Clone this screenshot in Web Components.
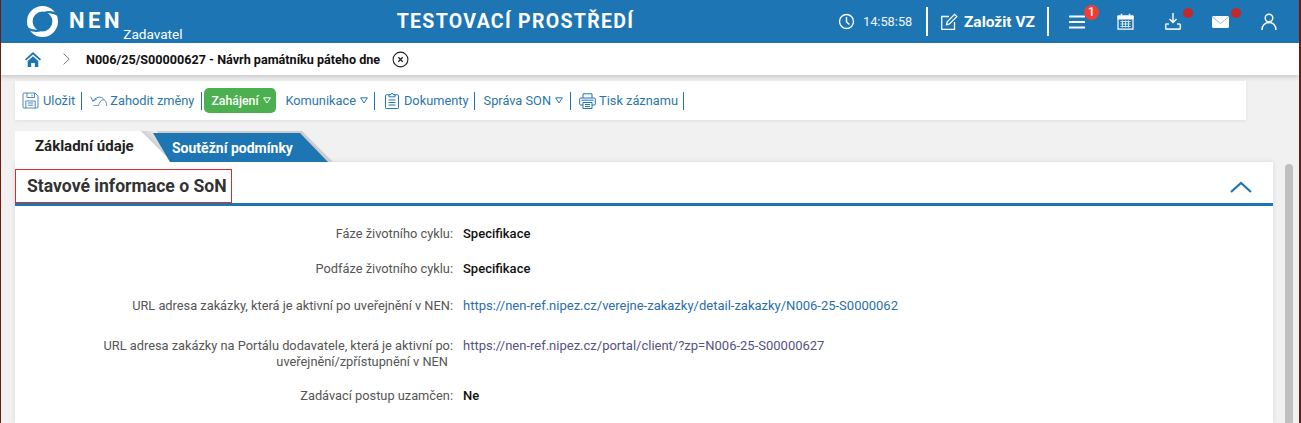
<!DOCTYPE html>
<html lang="cs"><head><meta charset="utf-8"><title>NEN</title>
<style>
html,body{margin:0;padding:0;height:423px;overflow:hidden;background:#f1f1f1;font-family:Roboto,sans-serif}
nen-app{display:block}
</style></head><body>
<nen-app></nen-app>
<script>
const ic={
clock:`<svg width="17" height="17" viewBox="0 0 17 17" fill="none" stroke="#fff" stroke-width="1.4"><circle cx="8.5" cy="8.5" r="7"/><path d="M8.5 4v4.7l2.8 2.8"/></svg>`,
edit:`<svg width="18" height="18" viewBox="0 0 18 18" fill="none" stroke="#fff" stroke-width="1.3"><path d="M9 3.5H1.700v12.800h12.800V9"/><path d="M6.500 11.800l.7-3L14.600 1.400l2.200 2.200-7.400 7.400z"/></svg>`,
menu:`<svg width="16" height="14" viewBox="0 0 16 14" fill="#fff"><rect y="0.5" width="16" height="2" rx=".5"/><rect y="6" width="16" height="2" rx=".5"/><rect y="11.5" width="16" height="2" rx=".5"/></svg>`,
cal:`<svg width="17" height="17" viewBox="0 0 17 17" fill="none" stroke="#fff"><path d="M1 3h15v13.200H1z" stroke-width="1.200"/><path d="M1 3h15v3H1z" fill="#fff"/><path d="M4.500 .8v3M12.500 .8v3" stroke-width="1.500"/><path d="M3.500 8.500h10M3.500 11h10M3.500 13.500h10M5.500 7.500v7M8.500 7.500v7M11.500 7.500v7" stroke="#d5e5f1" stroke-width="1"/></svg>`,
down:`<svg width="17" height="17" viewBox="0 0 17 17" fill="none" stroke="#fff" stroke-width="1.400"><path d="M8 0v9M4.500 6L8 9.500 11.500 6"/><path d="M4 11H1.300a.7.7 0 0 0-.6.7v3.600c0 .4.300.8.700.8h13.200c.4 0 .7-.4.700-.8v-3.600a.7.7 0 0 0-.7-.7H12" stroke="#e2edf5" stroke-width="1.600"/></svg>`,
mail:`<svg width="17" height="12" viewBox="0 0 17 12"><rect width="17" height="12" rx="1.500" fill="#fff"/><path d="M1 1.500l7.500 6 7.500-6" fill="none" stroke="#8dbbdc" stroke-width="1"/></svg>`,
user:`<svg width="16" height="17" viewBox="0 0 16 17" fill="none" stroke="#fff" stroke-width="1.400"><circle cx="8" cy="5" r="3.800"/><path d="M1 17c0-4.500 3-7.500 7-7.500s7 3 7 7.500"/></svg>`,
home:`<svg width="16" height="15" viewBox="0 0 16 15" fill="#1d75b4"><path d="M8 0L0 7.200l1.100 1.200L8 2.400l6.900 6L16 7.200z"/><path d="M2.700 9L8 4.300 13.300 9v6H9.800v-4H6.200v4H2.700z"/></svg>`,
chev:`<svg width="7" height="12" viewBox="0 0 7 12" fill="none" stroke="#777" stroke-width="1"><path d="M.6.6L6.200 6 .6 11.400"/></svg>`,
close:`<svg width="17" height="17" viewBox="0 0 17 17" fill="none" stroke="#222"><circle cx="8.500" cy="8.500" r="7.400" stroke-width="1.100"/><path d="M6.300 6.300l4.400 4.400M10.700 6.300l-4.400 4.400" stroke-width="1.300"/></svg>`,
save:`<svg width="17" height="17" viewBox="0 0 17 17" fill="none" stroke="#4f8ab5" stroke-width="1"><path d="M1 2a1 1 0 0 1 1-1h11l3 3v11a1 1 0 0 1-1 1H2a1 1 0 0 1-1-1z"/><path d="M5 1v4.500h7.500V1M10 2.500v1.700"/><path d="M3.800 16V9h9.400v7M5.800 11h5.400M5.800 13.200h5.400"/></svg>`,
undo:`<svg width="17" height="10" viewBox="0 0 17 10" fill="none" stroke="#4f8ab5" stroke-width="1"><path d="M.8 .8l2 4.400 4-2.200"/><path d="M2.700 5C5.300 2 8 1 10 1.200c2 .2 3.400 1.200 4 2.300"/><path d="M3 9.800h5.500c.8-3.700 3-6 5-6s3 2.400 3 6"/></svg>`,
doc:`<svg width="14" height="17" viewBox="0 0 14 17" fill="none" stroke="#1d75b4" stroke-width="1"><path d="M4 2.800H1.200a.7.7 0 0 0-.7.7v12.300c0 .4.300.7.7.7h11.600c.4 0 .7-.3.7-.7V3.500a.7.7 0 0 0-.7-.7H10"/><path d="M4 4.800V2.600h1.800a1.200 1.200 0 0 1 2.400 0H10v2.200zM3.500 8h7M3.500 10.500h7M3.500 13h7"/></svg>`,
print:`<svg width="17" height="16" viewBox="0 0 17 16" fill="none" stroke="#1d75b4" stroke-width="1"><path d="M4 5V.8h9V5M4 12H1.700a1 1 0 0 1-1-1V6a1 1 0 0 1 1-1h13.600a1 1 0 0 1 1 1v5a1 1 0 0 1-1 1H13"/><path d="M4 9.500h9v6H4zM6 11.500h5M6 13.500h5M2.500 7.200h12"/></svg>`
};
function def(name,html){
  customElements.define(name,class extends HTMLElement{
    connectedCallback(){ if(this.shadowRoot) return; const s=this.attachShadow({mode:'open'}); s.innerHTML=typeof html==='function'?html(this):html; }
  });
}
def('nen-logo',`<style>:host{display:flex;align-items:flex-start;color:#fff;width:187px;flex:none;padding:5px 0 0 27px;box-sizing:border-box}
.n{font:700 22px/26px Roboto,sans-serif;letter-spacing:3.6px;margin:2px 0 0 11px}
.z{font:400 13.600px/16px Roboto,sans-serif;margin:20px 0 0 0}
svg{display:block;flex:none}</style>
<svg width="31" height="31" viewBox="0 0 31 31"><circle cx="15.500" cy="15.500" r="12.700" fill="none" stroke="#fff" stroke-width="5.600"/><path d="M17 7Q24 4.500 31.500 9M14 24Q7 26.500 -.5 22" fill="none" stroke="#1d75b4" stroke-width="2.200"/></svg>
<div class="n">NEN</div><div class="z">Zadavatel</div>`);
def('nen-header',()=>`<style>:host{display:flex;height:43px;background:#1d75b4;color:#fff;align-items:center;position:relative}
.t{flex:1;text-align:center;font:700 19.500px/43px Roboto,sans-serif;letter-spacing:1.300px;margin-left:6px}
.r{display:flex;align-items:center;flex:none;height:43px}
.time{display:flex;align-items:center;gap:8px;font:400 12.800px Roboto,sans-serif;width:88px;color:#eef4f9}
.sep{width:2px;height:29px;background:#fff;flex:none}
.zal{display:flex;align-items:center;gap:6px;font:700 15.500px Roboto,sans-serif;padding:0 12px 0 12px}
.i{position:relative;display:flex;align-items:center;justify-content:center;flex:none}
svg{display:block}
.badge{position:absolute;left:15px;top:-10px;width:15px;height:15px;border-radius:50%;background:#ef3e36;font:500 12px/15px Roboto,sans-serif;text-align:center;color:#fff}
.dot{position:absolute;width:10px;height:10px;border-radius:50%;background:#c62828}
</style>
<nen-logo></nen-logo><div class="t">TESTOVACÍ PROSTŘEDÍ</div>
<div class="r"><div class="time">${ic.clock}<span>14:58:58</span></div><div class="sep"></div>
<div class="zal">${ic.edit}<span>Založit VZ</span></div><div class="sep"></div>
<div class="i" style="margin-left:20px;width:16px">${ic.menu}<span class="badge">1</span></div>
<div class="i" style="margin-left:32px;width:17px">${ic.cal}</div>
<div class="i" style="margin-left:31px;width:17px">${ic.down}<span class="dot" style="left:18px;top:-5px"></span></div>
<div class="i" style="margin-left:30px;width:17px">${ic.mail}<span class="dot" style="left:19px;top:-8px"></span></div>
<div class="i" style="margin-left:32px;width:16px;margin-right:22px">${ic.user}</div></div>`);
def('nen-crumbs',()=>`<style>:host{display:flex;height:32px;background:#fff;align-items:center;padding-left:25px;box-shadow:0 2px 5px rgba(0,0,0,.18);position:relative;font:700 12.600px Roboto,sans-serif;color:#111}
svg{display:block}</style>
${ic.home}<span style="margin-left:22px;display:flex">${ic.chev}</span><span style="margin-left:16px">N006/25/S00000627 - Návrh památníku páteho dne</span><span style="margin-left:12px">${ic.close}</span>`);
customElements.define('nen-btn',class extends HTMLElement{connectedCallback(){if(this.shadowRoot)return;const s=this.attachShadow({mode:'open'});
 const icon=this.getAttribute('icon'),caret=this.hasAttribute('caret'),g=this.getAttribute('gap')||4;
 s.innerHTML=`<style>:host{display:flex;align-items:center;color:#2b76ab;font:400 12.800px Roboto,sans-serif;height:18px;padding:0 7px 0 8px;border-right:1px solid #1d75b4}
 svg{display:block;flex:none}.ic{margin-right:${g}px}</style>
 ${icon?`<span class="ic">${ic[icon]}</span>`:''}<slot></slot>${caret?`<svg style="margin-left:4px" width="8" height="7" viewBox="0 0 8 7" fill="none" stroke="#2b76ab" stroke-width="1"><path d="M.6.8h6.800L4 6z"/></svg>`:''}`}});
def('nen-toolbar',`<style>:host{display:flex;align-items:center;height:39px;background:#fff;margin:6px 0 0 15px;width:1231px;box-shadow:0 1px 3px rgba(0,0,0,.08);box-sizing:border-box;padding-left:7px}
.g{display:flex;align-items:center;padding:0 0 0 7px;margin:0 0 0 2px;background:#4caf50;border-radius:5px;color:#fff;font:500 12.300px Roboto,sans-serif;box-sizing:border-box;width:72px;height:25px;white-space:nowrap}
svg{margin-left:4px;display:block}</style>
<nen-btn icon="save" style="padding:0 6px 0 0">Uložit</nen-btn><nen-btn icon="undo" gap="3">Zahodit změny</nen-btn>
<div class="g">Zahájení<svg width="8" height="7" viewBox="0 0 8 7" fill="none" stroke="#fff"><path d="M.6.8h6.800L4 6z"/></svg></div>
<nen-btn caret style="padding:0 6px 0 9px">Komunikace</nen-btn><nen-btn icon="doc" gap="5" style="padding:0 5px 0 10px">Dokumenty</nen-btn><nen-btn caret style="padding:0 7px 0 9px">Správa SON</nen-btn><nen-btn icon="print" gap="3" style="padding:0 5px 0 8px">Tisk záznamu</nen-btn>`);
def('nen-tabs',`<style>:host{display:flex;height:31px;margin:11px 0 0 15px}
.a{position:relative;width:157px;height:31px;flex:none;font:700 15px/31px Roboto,sans-serif;color:#222}
.a::before{content:"";position:absolute;inset:0;background:#fff;clip-path:polygon(0 0,126px 0,157px 31px,0 31px)}
.a::after{content:"";position:absolute;left:126px;top:0;width:44px;height:31px;background:linear-gradient(45deg,#cfcfcf 41%,#f1f1f1 62%);clip-path:polygon(0 0,27px 0,44px 31px,31px 31px)}
.a span{position:relative;z-index:1;padding-left:20px}
.b{position:relative;width:180px;height:31px;margin-left:-19px;flex:none;color:#fff;font:700 14px/35px Roboto,sans-serif}
.b::before{content:"";position:absolute;inset:0;background:#cdcdcd;clip-path:polygon(4px 0,149px 0,180px 31px,17px 31px)}
.b::after{content:"";position:absolute;inset:0;background:#1d75b4;clip-path:polygon(0 2px,147px 2px,175px 31px,17px 31px)}
.b span{position:relative;z-index:1;padding-left:19px}
</style><div class="a"><span>Základní údaje</span></div><div class="b"><span>Soutěžní podmínky</span></div>`);
def('nen-section',`<style>:host{display:flex;align-items:flex-end;justify-content:space-between;height:44px;border-bottom:3px solid #1d75b4;box-sizing:border-box;padding-right:21px}
.t{border:1px solid #d32f2f;font:700 17.600px/33px Roboto,sans-serif;color:#333;width:217px;height:34px;box-sizing:border-box;padding-left:11px}
svg{display:block;margin-bottom:10px}</style><div class="t"><slot></slot></div>
<svg width="22" height="12" viewBox="0 0 22 12" fill="none" stroke="#1d75b4" stroke-width="2.200"><path d="M1 11L11 2l10 9"/></svg>`);
customElements.define('nen-row',class extends HTMLElement{connectedCallback(){if(this.shadowRoot)return;const s=this.attachShadow({mode:'open'});
 const h=this.getAttribute('h')||35;
 s.innerHTML=`<style>:host{display:grid;grid-template-columns:438px 1fr;column-gap:10px;height:${h}px}
 .l{text-align:right;font:400 12.800px/16px Roboto,sans-serif;color:#555}
 .v{font:500 13px/16px Roboto,sans-serif;color:#111}
 ::slotted(a){color:#2a6ea8;text-decoration:none;font-weight:400}
 </style><div class="l"><slot name="l"></slot></div><div class="v"><slot></slot></div>`}});
def('nen-panel',`<style>:host{display:block;background:#fff;width:1258px;margin-left:15px;height:261px;box-shadow:0 0 5px rgba(0,0,0,.1);overflow:hidden}</style><slot></slot>`);
def('nen-scroll',`<style>:host{display:block;position:absolute;left:1284px;top:164px;width:8px;height:259px;background:#bfbfbf;border-radius:4px 4px 0 0}</style>`);
def('nen-app',`<style>:host{display:block;width:1301px;height:423px;box-sizing:border-box;border-left:1px solid #6b1a14;border-right:2px solid #6b1a14;position:relative;overflow:hidden}
.in{margin-left:-1px}
a{color:#2a6ea8;text-decoration:none}
</style><div class="in"><nen-header></nen-header><nen-crumbs></nen-crumbs><nen-toolbar></nen-toolbar><nen-tabs></nen-tabs>
<nen-panel><nen-section>Stavové informace o SoN</nen-section>
<div style="padding-top:20px">
<nen-row h="35"><span slot="l">Fáze životního cyklu:</span>Specifikace</nen-row>
<nen-row h="37"><span slot="l">Podfáze životního cyklu:</span>Specifikace</nen-row>
<nen-row h="40"><span slot="l">URL adresa zakázky, která je aktivní po uveřejnění v NEN:</span><a href="#">https://nen-ref.nipez.cz/verejne-zakazky/detail-zakazky/N006-25-S0000062</a></nen-row>
<nen-row h="50"><span slot="l">URL adresa zakázky na Portálu dodavatele, která je aktivní po:<br><span style="padding-right:5px">uveřejnění/zpřístupnění v NEN</span></span><a href="#" style="color:#55527f">https://nen-ref.nipez.cz/portal/client/?zp=N006-25-S00000627</a></nen-row>
<nen-row h="30"><span slot="l">Zadávací postup uzamčen:</span>Ne</nen-row>
</div></nen-panel></div><nen-scroll></nen-scroll>`);
</script>
</body></html>
